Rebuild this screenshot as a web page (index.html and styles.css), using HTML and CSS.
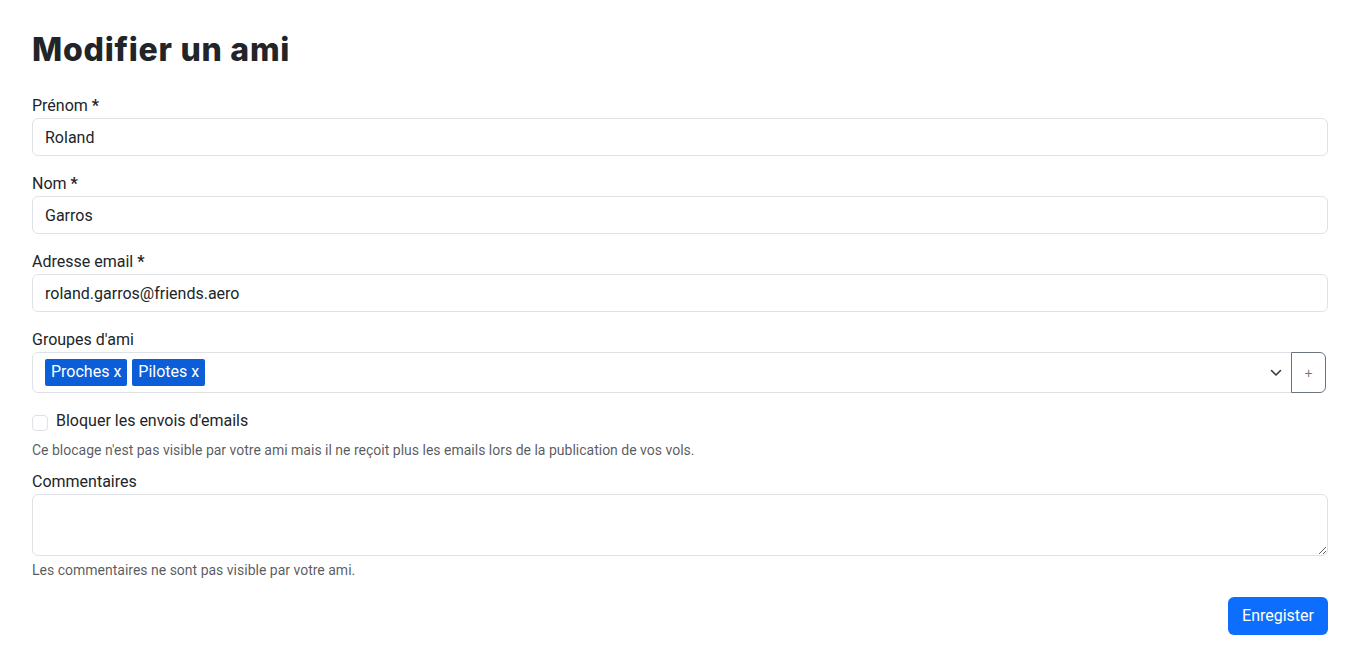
FILE: index.html
```html
<!DOCTYPE html>
<html lang="fr">
<head>
  <meta charset="UTF-8" />
  <title>Modifier un ami</title>
  <link rel="stylesheet" href="styles.css">
</head>
<body>
  <div class="page">
    <h2>Modifier un ami</h2>

    <form>
      <div class="field">
        <label for="firstname">Prénom <b>*</b></label>
        <input type="text" id="firstname" value="Roland">
      </div>
      <div class="field">
        <label for="lastname">Nom <b>*</b></label>
        <input type="text" id="lastname" value="Garros">
      </div>
      <div class="field">
        <label for="email">Adresse email <b>*</b></label>
        <input type="text" id="email" value="roland.garros@friends.aero">
      </div>

      <div class="field">
        <label>Groupes d'ami</label>
        <div class="group">
          <div class="tags">
            <span class="tag">Proches x</span>
            <span class="tag">Pilotes x</span>
            <svg class="chevron" width="12" height="8" viewBox="0 0 12 8">
              <path d="M1.5 1.5l4.5 4.5 4.5-4.5" fill="none" stroke="#343a40" stroke-width="1.6" stroke-linecap="round" stroke-linejoin="round"/>
            </svg>
          </div>
          <button type="button" class="add">+</button>
        </div>
      </div>

      <!-- blocage des emails -->
      <div class="check">
        <input type="checkbox" id="block">
        <label for="block">Bloquer les envois d'emails</label>
      </div>
      <div class="help help-block">Ce blocage n'est pas visible par votre ami mais il ne reçoit plus les emails lors de la publication de vos vols.</div>

      <div class="field">
        <label for="comments">Commentaires</label>
        <textarea id="comments" rows="2"></textarea>
        <div class="help">Les commentaires ne sont pas visible par votre ami.</div>
      </div>

      <div class="actions">
        <button type="submit" class="save">Enregister</button>
      </div>
    </form>
  </div>
</body>
</html>
```

FILE: styles.css
```css
body { margin: 0; font-family: Roboto, "Noto Sans", sans-serif; font-size: 16px; line-height: 1.5; color: #212529; background: #fff; }
.page { width: 1296px; margin-left: 32px; padding-top: 31px; }
h2 { font-family: Inter, Lato, sans-serif; font-weight: 800; font-size: 32px; line-height: 1.2; letter-spacing: 0.75px; margin: 0 0 25px; }
label { display: block; }
label b { font-weight: 700; }
.field { margin-bottom: 16px; }
input[type=text], textarea { display: block; box-sizing: border-box; width: 100%; padding: 6px 12px; font: inherit; color: #212529; border: 1px solid #dee2e6; border-radius: 6px; background: #fff; }
input[type=text] { height: 38px; }
textarea { height: 62px; resize: vertical; }
.group { display: flex; margin-right: 2px; }
.tags { flex: 1; display: flex; align-items: center; gap: 5px; height: 41px; box-sizing: border-box; padding: 0 9px 0 12px; border: 1px solid #dee2e6; border-radius: 6px 0 0 6px; }
.tag { background: #0b5ed7; color: #fff; padding: 1px 6px 2px; line-height: 24px; border-radius: 2px; }
.chevron { margin-left: auto; }
.add { width: 35px; height: 41px; margin-left: -1px; background: #fff; color: #6c757d; border: 1px solid #6c757d; border-radius: 0 6px 6px 0; font-size: 14px; padding: 0; }
.check { display: flex; align-items: center; gap: 8px; height: 24px; margin-bottom: 7px; }
.check input { appearance: none; width: 16px; height: 16px; margin: 3px 0 0; border: 1px solid #dee2e6; border-radius: 4px; background: #fff; }
.help { margin-top: 4px; font-size: 14px; color: rgba(33, 37, 41, .75); }
.help-block { margin-top: 0; margin-bottom: 9px; }
.actions { display: flex; justify-content: flex-end; }
.save { height: 38px; padding: 6px 14px; background: #0d6efd; color: #fff; border: none; border-radius: 6px; font: inherit; }
```
